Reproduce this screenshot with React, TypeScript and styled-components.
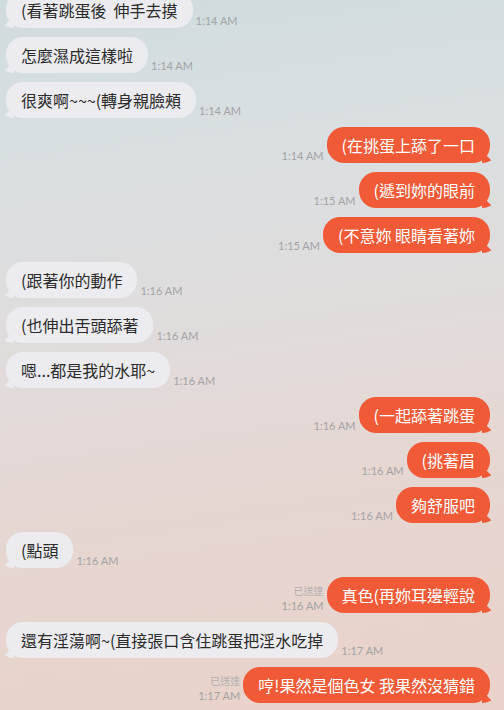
import styled, { createGlobalStyle } from "styled-components";

type Msg = {
  side: "in" | "out";
  text: string;
  time: string;
  read?: boolean;
};

const messages: Msg[] = [
  { side: "in", text: "(看著跳蛋後  伸手去摸", time: "1:14 AM" },
  { side: "in", text: "怎麼濕成這樣啦", time: "1:14 AM" },
  { side: "in", text: "很爽啊~~~(轉身親臉頰", time: "1:14 AM" },
  { side: "out", text: "(在挑蛋上舔了一口", time: "1:14 AM" },
  { side: "out", text: "(遞到妳的眼前", time: "1:15 AM" },
  { side: "out", text: "(不意妳 眼睛看著妳", time: "1:15 AM" },
  { side: "in", text: "(跟著你的動作", time: "1:16 AM" },
  { side: "in", text: "(也伸出舌頭舔著", time: "1:16 AM" },
  { side: "in", text: "嗯...都是我的水耶~", time: "1:16 AM" },
  { side: "out", text: "(一起舔著跳蛋", time: "1:16 AM" },
  { side: "out", text: "(挑著眉", time: "1:16 AM" },
  { side: "out", text: "夠舒服吧", time: "1:16 AM" },
  { side: "in", text: "(點頭", time: "1:16 AM" },
  { side: "out", text: "真色(再妳耳邊輕說", time: "1:16 AM", read: true },
  { side: "in", text: "還有淫蕩啊~(直接張口含住跳蛋把淫水吃掉", time: "1:17 AM" },
  { side: "out", text: "哼!果然是個色女 我果然沒猜錯", time: "1:17 AM", read: true },
];

const GlobalStyle = createGlobalStyle`
  html, body {
    margin: 0;
    padding: 0;
    height: 100%;
    overflow: hidden;
  }
  body {
    font-family: "Noto Sans CJK TC", "Noto Sans", sans-serif;
  }
`;

const App = () => {
  return (
    <>
      <GlobalStyle />
      <Screen>
        <List>
          {messages.map((m, i) => (
            <Row key={i} $side={m.side}>
              <Bubble $side={m.side}>{m.text}</Bubble>
              <Meta $side={m.side}>
                {m.read && <span>已送達</span>}
                <span>{m.time}</span>
              </Meta>
            </Row>
          ))}
        </List>
      </Screen>
    </>
  );
};

export default App;

const Screen = styled.div`
  width: 504px;
  height: 710px;
  overflow: hidden;
  background: linear-gradient(
    172deg,
    #d0dbde 0%,
    #d9dfe1 22%,
    #e0dcdc 45%,
    #e6d6d1 70%,
    #e9d2ca 100%
  );
`;

const List = styled.div`
  display: flex;
  flex-direction: column;
  gap: 9px;
  margin-top: -8px;
  padding: 0 14px 0 6px;
`;

const Row = styled.div<{ $side: "in" | "out" }>`
  display: flex;
  flex-direction: ${(p) => (p.$side === "in" ? "row" : "row-reverse")};
  align-items: flex-end;
  gap: 3px;
`;

const Bubble = styled.div<{ $side: "in" | "out" }>`
  position: relative;
  height: 36px;
  box-sizing: border-box;
  padding: 0 15px;
  display: flex;
  align-items: center;
  border-radius: 17px;
  font-size: 16px;
  white-space: pre;
  color: ${(p) => (p.$side === "in" ? "#2a2a2a" : "#ffffff")};
  background: ${(p) => (p.$side === "in" ? "#ececf0" : "#f05a37")};

  &::after {
    content: "";
    position: absolute;
    bottom: 0;
    width: 12px;
    height: 12px;
    background: inherit;
    ${(p) =>
      p.$side === "in"
        ? "left: -4px; border-radius: 0 0 0 12px / 0 0 0 8px; clip-path: polygon(0 100%, 100% 0, 100% 100%);"
        : "right: -4px; border-radius: 0 0 12px 0 / 0 0 8px 0; clip-path: polygon(0 0, 100% 100%, 0 100%);"}
  }
`;

const Meta = styled.div<{ $side: "in" | "out" }>`
  display: flex;
  flex-direction: column;
  align-items: ${(p) => (p.$side === "in" ? "flex-start" : "flex-end")};
  font-family: "Lato", "Liberation Sans", sans-serif;
  font-size: 11px;
  line-height: 15px;
  color: #a3a3a6;
  padding-bottom: 0;
  white-space: nowrap;

  span:first-child:not(:last-child) {
    font-family: "Noto Sans CJK TC", sans-serif;
    font-size: 10px;
    color: #b0aeb0;
  }
`;
